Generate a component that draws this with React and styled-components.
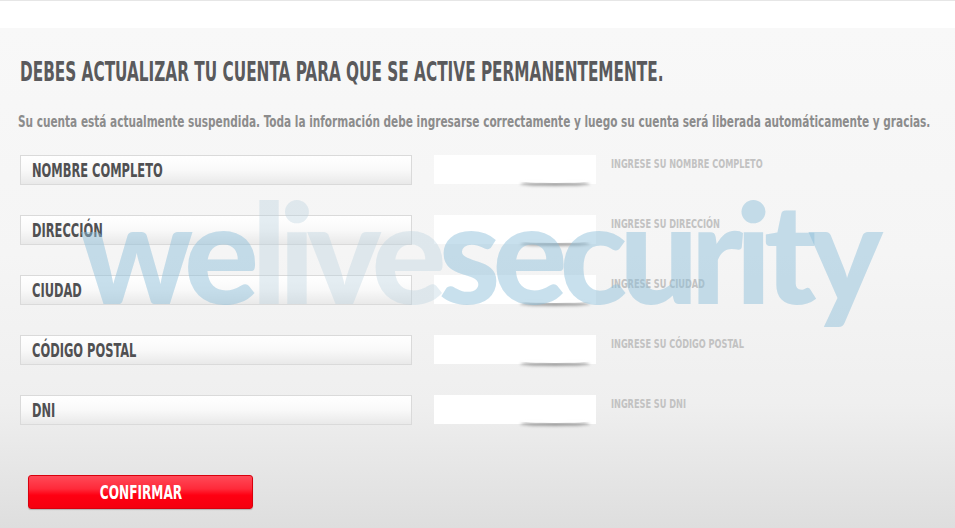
import React from 'react';
import styled, { createGlobalStyle } from 'styled-components';

const GlobalStyle = createGlobalStyle`
  html, body {
    margin: 0;
    padding: 0;
  }
  body {
    width: 955px;
    height: 528px;
    overflow: hidden;
    font-family: "Liberation Sans Narrow", "DejaVu Sans Condensed", "Liberation Sans", sans-serif;
  }
`;

const Page = styled.div`
  position: relative;
  width: 955px;
  height: 528px;
  display: flex;
  flex-direction: column;
  background: #fff;
  overflow: hidden;
`;

const TopBar = styled.div`
  height: 28px;
  flex: none;
  background: #fff;
  border-top: 1px solid #e6e6e6;
  box-sizing: border-box;
`;

const Panel = styled.div`
  flex: 1;
  min-width: 0;
  padding: 29px 18px 0 20px;
  background: linear-gradient(to bottom, #f8f8f8 0%, #f5f5f5 45%, #efefef 75%, #dedede 100%);
`;

// the reference uses a condensed DIN-like face; squeeze the installed one to its widths
const Squeeze = styled.span`
  display: inline-block;
  transform: scaleX(${(p) => p.$x});
  transform-origin: ${(p) => (p.$center ? 'center' : 'left')} center;
  white-space: nowrap;
`;

const Title = styled.h1`
  margin: 0;
  font-size: 26px;
  line-height: 30px;
  font-weight: 700;
  color: #5a5a5c;
  white-space: nowrap;
`;

const Intro = styled.p`
  margin: 25px 0 0 -2px;
  font-size: 16px;
  line-height: 20px;
  font-weight: 700;
  color: #8c8c8c;
  white-space: nowrap;
`;

const Form = styled.div`
  margin-top: 23px;
  display: flex;
  flex-direction: column;
  gap: 30px;
`;

const Row = styled.div`
  display: grid;
  grid-template-columns: 392px 162px auto;
  column-gap: 22px;
  align-items: start;
`;

const FieldLabel = styled.div`
  height: 30px;
  box-sizing: border-box;
  border: 1px solid #dadada;
  padding-left: 11px;
  display: flex;
  align-items: center;
  background: linear-gradient(to bottom, #ffffff 0%, #f9f9f9 50%, #e9e9e9 100%);
  font-size: 19px;
  font-weight: 700;
  color: #505052;
`;

const InputBox = styled.div`
  position: relative;
  height: 29px;
  background: #fff;
  &::after {
    content: '';
    position: absolute;
    right: 6px;
    bottom: 1px;
    width: 70px;
    height: 4px;
    border-radius: 50%;
    box-shadow: 0 3px 3px rgba(0, 0, 0, 0.35);
  }
`;

const Hint = styled.span`
  margin-left: -7px;
  padding-top: 1px;
  font-size: 13px;
  line-height: 16px;
  font-weight: 700;
  color: #c2c2c2;
  white-space: nowrap;
`;

const Confirm = styled.button`
  margin: 50px 0 0 8px;
  width: 225px;
  height: 34px;
  border: 1px solid #d8000d;
  border-radius: 3px;
  background: linear-gradient(to bottom, #ff4a58 0%, #ff2a3a 40%, #ff0012 60%, #f5000e 100%);
  box-shadow: 0 1px 1px rgba(0, 0, 0, 0.2);
  color: #fff;
  font-family: inherit;
  font-size: 19px;
  font-weight: 700;
  cursor: pointer;
`;

const Watermark = styled.div`
  position: absolute;
  left: 80px;
  top: 170px;
  font-family: Lato, "Open Sans", sans-serif;
  font-weight: 900;
  font-size: 140px;
  line-height: 160px;
  letter-spacing: -8px;
  white-space: nowrap;
  pointer-events: none;
  color: rgba(140, 190, 218, 0.48);
`;

const Faded = styled.span`
  color: rgba(180, 205, 222, 0.35);
`;

const fields = [
  { label: 'NOMBRE COMPLETO', hint: 'INGRESE SU NOMBRE COMPLETO' },
  { label: 'DIRECCIÓN', hint: 'INGRESE SU DIRECCIÓN' },
  { label: 'CIUDAD', hint: 'INGRESE SU CIUDAD' },
  { label: 'CÓDIGO POSTAL', hint: 'INGRESE SU CÓDIGO POSTAL' },
  { label: 'DNI', hint: 'INGRESE SU DNI' },
];

export default function App() {
  return (
    <>
      <GlobalStyle />
      <Page>
        <TopBar />
        <Panel>
          <Title>
            <Squeeze $x={0.654}>DEBES ACTUALIZAR TU CUENTA PARA QUE SE ACTIVE PERMANENTEMENTE.</Squeeze>
          </Title>
          <Intro>
            <Squeeze $x={0.731}>
              Su cuenta está actualmente suspendida. Toda la información debe ingresarse correctamente y luego su cuenta será liberada automáticamente y gracias.
            </Squeeze>
          </Intro>
          <Form>
            {fields.map((f) => (
              <Row key={f.label}>
                <FieldLabel>
                  <Squeeze $x={0.67}>{f.label}</Squeeze>
                </FieldLabel>
                <InputBox />
                <Hint>
                  <Squeeze $x={0.7}>{f.hint}</Squeeze>
                </Hint>
              </Row>
            ))}
          </Form>
          <Confirm type="button">
            <Squeeze $x={0.71} $center>CONFIRMAR</Squeeze>
          </Confirm>
        </Panel>
        <Watermark>
          we<Faded>live</Faded>security
        </Watermark>
      </Page>
    </>
  );
}
